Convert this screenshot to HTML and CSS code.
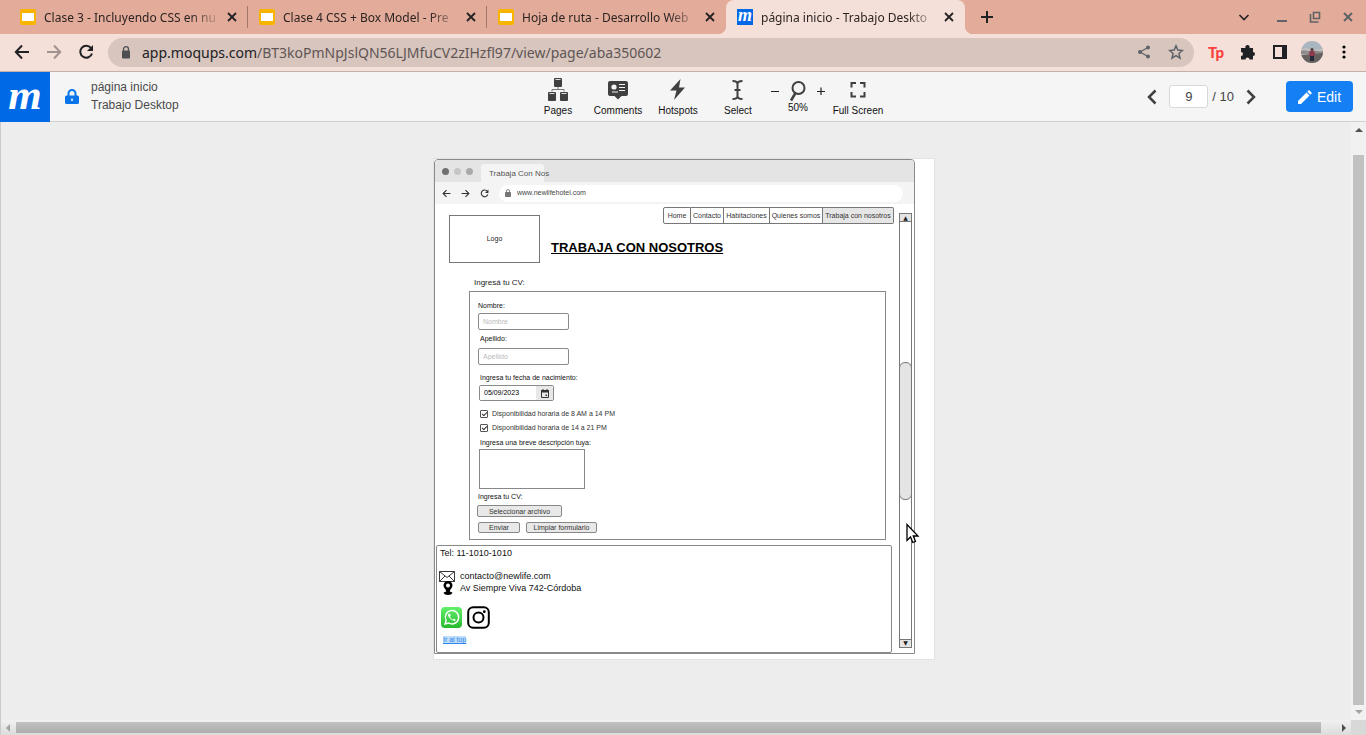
FILE: index.html
```html
<!DOCTYPE html>
<html lang="es">
<head>
<meta charset="utf-8">
<title>página inicio - Trabajo Desktop</title>
<link rel="stylesheet" href="styles.css">
</head>
<body>
<header class="tabstrip">
  <div class="tab">
    <span class="slides"></span><span class="tab-title">Clase 3 - Incluyendo CSS en nu</span>
    <button class="tab-close" aria-label="Cerrar"><svg width="10" height="10" viewBox="0 0 10 10"><path d="M1 1l8 8M9 1l-8 8"/></svg></button>
  </div>
  <div class="tab">
    <span class="slides"></span><span class="tab-title">Clase 4 CSS + Box Model - Pre</span>
    <button class="tab-close" aria-label="Cerrar"><svg width="10" height="10" viewBox="0 0 10 10"><path d="M1 1l8 8M9 1l-8 8"/></svg></button>
  </div>
  <div class="tab tab-last">
    <span class="slides"></span><span class="tab-title">Hoja de ruta - Desarrollo Web</span>
    <button class="tab-close" aria-label="Cerrar"><svg width="10" height="10" viewBox="0 0 10 10"><path d="M1 1l8 8M9 1l-8 8"/></svg></button>
  </div>
  <div class="tab tab-active">
    <span class="mfav">m</span><span class="tab-title">página inicio - Trabajo Deskto</span>
    <button class="tab-close" aria-label="Cerrar"><svg width="10" height="10" viewBox="0 0 10 10"><path d="M1 1l8 8M9 1l-8 8"/></svg></button>
  </div>
  <button class="new-tab" aria-label="Nueva pestaña"><svg width="12" height="12" viewBox="0 0 12 12"><path d="M6 0v12M0 6h12"/></svg></button>
  <div class="win-controls">
    <button aria-label="Buscar pestañas"><svg width="12" height="12" viewBox="0 0 12 12"><path d="M1.500 4L6 8.500L10.500 4" fill="none" stroke="#222" stroke-width="1.600"/></svg></button>
    <button class="minimize" aria-label="Minimizar"><svg width="12" height="12" viewBox="0 0 12 12"><path d="M1 10h10" stroke="#5f6368" stroke-width="2"/></svg></button>
    <button aria-label="Restaurar"><svg width="12" height="12" viewBox="0 0 12 12"><path d="M4.500 1.500h6v6h-6zM1.500 3v8h8" fill="none" stroke="#5f6368" stroke-width="1.600"/></svg></button>
    <button aria-label="Cerrar ventana"><svg width="12" height="12" viewBox="0 0 12 12"><path d="M2 2l8 8M10 2l-8 8" stroke="#5f6368" stroke-width="2"/></svg></button>
  </div>
</header>
<nav class="toolbar">
  <button class="bar-btn" aria-label="Atrás"><svg width="16" height="16" viewBox="0 0 16 16"><path d="M15 8H2M8 1.500L1.800 8L8 14.500" fill="none" stroke="#202124" stroke-width="2"/></svg></button>
  <button class="bar-btn" aria-label="Adelante"><svg width="16" height="16" viewBox="0 0 16 16"><path d="M1 8h13M8 1.500L14.200 8L8 14.500" fill="none" stroke="#a19290" stroke-width="2"/></svg></button>
  <button class="bar-btn" aria-label="Recargar"><svg width="16" height="16" viewBox="0 0 16 16"><path d="M13 4A6 6 0 1 0 14 9.500" fill="none" stroke="#202124" stroke-width="2"/><path d="M15 1v6H9z" fill="#202124"/></svg></button>
  <div class="omnibox">
    <svg width="10" height="13" viewBox="0 0 10 13"><rect x="1" y="4.500" width="8" height="8" rx="1" fill="#4d4f52"/><path d="M2.500 5V3.200a2.500 2.500 0 0 1 5 0V5" fill="none" stroke="#4d4f52" stroke-width="1.300"/></svg>
    <span class="url"><b>app.moqups.com</b>/BT3koPmNpJslQN56LJMfuCV2zIHzfl97/view/page/aba350602</span>
    <button class="bar-btn" aria-label="Compartir"><svg width="14" height="14" viewBox="0 0 14 14"><path d="M11 2.500L3 7l8 4.500" fill="none" stroke="#5f6368" stroke-width="1.300"/><circle cx="11" cy="2.500" r="2" fill="#5f6368"/><circle cx="3" cy="7" r="2" fill="#5f6368"/><circle cx="11" cy="11.500" r="2" fill="#5f6368"/></svg></button>
    <button class="bar-btn" aria-label="Marcador"><svg width="16" height="16" viewBox="0 0 16 16"><path d="M8 1.800l1.800 4.300 4.600.4-3.500 3 1.100 4.600L8 11.600l-4 2.500 1.100-4.600-3.500-3 4.600-.4z" fill="none" stroke="#5f6368" stroke-width="1.500"/></svg></button>
  </div>
  <button class="bar-btn tp" aria-label="Tp">Tp</button>
  <button class="bar-btn" aria-label="Extensiones"><svg width="16" height="16" viewBox="0 0 16 16"><path d="M1 4h4.500a2.200 2.200 0 1 1 4 0H13v4a2 2 0 1 1 0 4v3.500H9.500a2 2 0 0 0-4 0H1V12a2 2 0 0 0 0-4z" fill="#202124"/></svg></button>
  <button class="bar-btn" aria-label="Panel lateral"><svg width="14" height="14" viewBox="0 0 14 14"><rect x="1" y="1" width="12" height="12" fill="none" stroke="#202124" stroke-width="2"/><path d="M9 0h5v14H9z" fill="#202124"/></svg></button>
  <button class="bar-btn" aria-label="Perfil"><svg width="22" height="22" viewBox="0 0 22 22"><defs><clipPath id="av"><circle cx="11" cy="11" r="11"/></clipPath></defs><g clip-path="url(#av)"><path d="M0 0h22v22H0z" fill="#a9b5bf"/><path d="M0 8l5-1 6 2 11-1v6H0z" fill="#c4bfbc"/><path d="M0 10c4-2 7 1 11 0s7 1 11 0v3H0z" fill="#8f8c8d"/><path d="M0 14l22-2v10H0z" fill="#66605f"/><circle cx="11" cy="8.500" r="1.500" fill="#503635"/><path d="M8.500 10h5l.5 5h-6z" fill="#8c3b4e"/><path d="M9 15h4v5H9z" fill="#272a3a"/></g></svg></button>
  <button class="bar-btn" aria-label="Menú"><svg width="4" height="14" viewBox="0 0 4 14"><circle cx="2" cy="2" r="1.600"/><circle cx="2" cy="7" r="1.600"/><circle cx="2" cy="12" r="1.600"/></svg></button>
</nav>
<header class="app-bar">
  <div class="app-left">
    <span class="brand">m</span>
    <svg class="lock" width="14" height="16" viewBox="0 0 14 16"><rect x="0" y="6.500" width="14" height="8.500" rx="1.500" fill="#0a74ea"/><path d="M3.500 7V4.500a3.500 3.500 0 0 1 7 0V7" fill="none" stroke="#0a74ea" stroke-width="2"/><path d="M7 9.500v2.500" stroke="#fff" stroke-width="1.500"/></svg>
    <div class="doc"><span>página inicio</span><span>Trabajo Desktop</span></div>
  </div>
  <div class="tools">
    <button class="tool"><svg width="22" height="24" viewBox="0 0 22 24"><g fill="#404040"><rect x="7" y="0" width="8" height="9" rx="1"/><rect x="1" y="14" width="8" height="9" rx="1"/><rect x="13" y="14" width="8" height="9" rx="1"/></g><path d="M8.500 1.500h5M2.500 15.500h5M14.500 15.500h5" stroke="#ddd"/><path d="M11 9v2.500M5 13.500v-2h12v2" fill="none" stroke="#777"/></svg>Pages</button>
    <button class="tool"><svg width="22" height="24" viewBox="0 0 22 24"><path d="M3 3h16q2 0 2 2v11q0 2-2 2h-4.500L11 21.500l-3.500-3.500H3q-2 0-2-2V5q0-2 2-2z" fill="#404040"/><circle cx="7" cy="9" r="2.600" fill="#f4f4f4"/><path d="M12 6.500h6M12 9.500h6M12 12.500h6M5 14h6" stroke="#f4f4f4" stroke-width="1.200"/></svg>Comments</button>
    <button class="tool"><svg width="22" height="24" viewBox="0 0 22 24"><path d="M13.500 1L3 12.500h6.500L7 22 18 9.500h-6z" fill="#404040"/></svg>Hotspots</button>
    <button class="tool"><svg width="22" height="24" viewBox="0 0 22 24"><path d="M5.500 3q5 0 5 3q0-3 5-3M10.500 6v12M5.500 21q5 0 5-3q0 3 5 3M7.500 12h6" fill="none" stroke="#404040" stroke-width="2"/></svg>Select</button>
    <div class="zoomer">
      <button aria-label="Alejar"><svg width="8" height="8" viewBox="0 0 8 8"><path d="M0 4.500h8" stroke="#222"/></svg></button>
      <span class="zoom-value"><svg width="18" height="22" viewBox="0 0 18 22"><circle cx="9.500" cy="8" r="6" fill="none" stroke="#404040" stroke-width="2"/><path d="M6.500 13L2 20.500" stroke="#404040" stroke-width="2.500"/></svg>50%</span>
      <button aria-label="Acercar"><svg width="8" height="8" viewBox="0 0 8 8"><path d="M0 4.500h8M4 .5v8" stroke="#222" stroke-width="1.200"/></svg></button>
    </div>
    <button class="tool"><svg width="22" height="24" viewBox="0 0 22 24"><path d="M9 5H4.500v4.500M13 5h4.500v4.500M4.500 14v4.500H9M17.500 14v4.500H13" fill="none" stroke="#404040" stroke-width="2"/></svg>Full Screen</button>
  </div>
  <div class="pager">
    <button aria-label="Anterior"><svg width="10" height="16" viewBox="0 0 10 16"><path d="M8.500 1.500L2 8l6.500 6.500" fill="none" stroke="#404040" stroke-width="2.500"/></svg></button>
    <input class="page-no" aria-label="Página" value="9"><span class="page-total">/ 10</span>
    <button aria-label="Siguiente"><svg width="10" height="16" viewBox="0 0 10 16"><path d="M1.500 1.500L8 8l-6.500 6.500" fill="none" stroke="#404040" stroke-width="2.500"/></svg></button>
    <button class="edit"><svg width="14" height="14" viewBox="0 0 14 14"><path d="M0 14v-3l8.500-8.500 3 3L3 14zM9.300 1.700L11 0l3 3-1.700 1.700z" fill="#fff"/></svg>Edit</button>
  </div>
</header>
<main class="viewport">
  <section class="canvas">
    <article class="paper">
      <div class="mock">
        <div class="mock-tabs"><i class="dot d1"></i><i class="dot d2"></i><i class="dot d3"></i><span class="mock-tab">Trabaja Con Nos</span></div>
        <div class="mock-bar">
          <svg width="9" height="9" viewBox="0 0 16 16"><path d="M15 8H2M8 2L2 8l6 6" fill="none" stroke="#333" stroke-width="2"/></svg>
          <svg width="9" height="9" viewBox="0 0 16 16"><path d="M1 8h13M8 2l6 6-6 6" fill="none" stroke="#333" stroke-width="2"/></svg>
          <svg width="9" height="9" viewBox="0 0 16 16"><path d="M13 4A6 6 0 1 0 14 9.500" fill="none" stroke="#333" stroke-width="2"/><path d="M15 1v6H9z" fill="#333"/></svg>
          <span class="mock-url"><svg width="6" height="8" viewBox="0 0 10 13"><rect x="0" y="5" width="10" height="8" rx="1" fill="#777"/><path d="M2.500 5V3.200a2.500 2.500 0 0 1 5 0V5" fill="none" stroke="#777" stroke-width="1.500"/></svg>www.newlifehotel.com</span>
        </div>
        <div class="mock-body">
          <div class="mock-main">
            <div class="hero">
              <div class="logo">Logo</div>
              <div class="hero-right">
                <nav class="menu"><a href="#" class="w1">Home</a><a href="#" class="w2">Contacto</a><a href="#" class="w3">Habitaciones</a><a href="#" class="w4">Quienes somos</a><a href="#" class="w5 current">Trabaja con nosotros</a></nav>
                <h1>TRABAJA CON NOSOTROS</h1>
              </div>
            </div>
            <h2>Ingresá tu CV:</h2>
            <form class="cv">
              <label class="lb first" for="nombre">Nombre:</label>
              <input class="field" id="nombre" placeholder="Nombre">
              <label class="lb second" for="apellido">Apellido:</label>
              <input class="field" id="apellido" placeholder="Apellido">
              <label class="lb third" for="fecha">Ingresa tu fecha de nacimiento:</label>
              <div class="date"><input id="fecha" value="05/09/2023"><button type="button" aria-label="Calendario"><svg width="8" height="9" viewBox="0 0 8 9"><path d="M.5 1.500h7v7h-7z" fill="none" stroke="#333"/><path d="M0 1h8v2.500H0zM1.500 0h1v1h-1zM5.500 0h1v1h-1zM4.500 5.500h1.500v1.500H4.500z" fill="#333"/></svg></button></div>
              <label class="check c1"><input type="checkbox" checked>Disponibilidad horaria de 8 AM a 14 PM</label>
              <label class="check c2"><input type="checkbox" checked>Disponibilidad horaria de 14 a 21 PM</label>
              <label class="lb fourth" for="desc">Ingresa una breve descripción tuya:</label>
              <textarea id="desc"></textarea>
              <label class="lb fifth" for="archivo">Ingresa tu CV:</label>
              <button type="button" class="btn file" id="archivo">Seleccionar archivo</button>
              <div class="actions"><button type="button" class="btn send">Enviar</button><button type="button" class="btn clear">Limpiar formulario</button></div>
            </form>
            <footer class="foot">
              <p class="tel">Tel: 11-1010-1010</p>
              <p class="contact"><svg width="16" height="11" viewBox="0 0 16 11"><path d="M.5.5h15v10H.5zM.5.500L8 6.500 15.500.5M.5 10.500l5.500-5.500M15.500 10.500L10 5" fill="none" stroke="#222" stroke-width=".9"/></svg>contacto@newlife.com</p>
              <p class="contact address"><svg width="18" height="14" viewBox="0 0 18 14"><path d="M9 0a4.500 4.500 0 0 1 4.500 4.500C13.500 7 11 8 10.800 10.500Q13.500 11 13.500 12q-1 2-4.500 2t-4.500-2q0-1 2.700-1.500C7 8 4.500 7 4.500 4.500A4.500 4.500 0 0 1 9 0z"/><circle cx="9" cy="4.500" r="2" fill="#fff"/></svg>Av Siempre Viva 742-Córdoba</p>
              <div class="social">
                <svg width="21" height="21" viewBox="0 0 21 21"><defs><linearGradient id="wa" x2="0" y2="1"><stop stop-color="#63f06a"/><stop offset="1" stop-color="#26b92d"/></linearGradient></defs><rect width="21" height="21" rx="4" fill="url(#wa)"/><path d="M4 17l1.200-3.500A6.700 6.700 0 1 1 7.700 16z" fill="none" stroke="#fff" stroke-width="1.400"/><path d="M8 6.500q-2 1.500.5 4.500t5.500 3q1-1 .5-1.500l-1.700-.8-1 1Q9.500 11.500 9 9.800l.8-1-.8-2z" fill="#fff"/></svg>
                <svg width="23" height="23" viewBox="0 0 23 23"><rect x="1.200" y="1.200" width="20.600" height="20.600" rx="5" fill="none" stroke="#000" stroke-width="2"/><circle cx="11.500" cy="11.500" r="5" fill="none" stroke="#000" stroke-width="2"/><circle cx="17.300" cy="5.700" r="1.400"/></svg>
              </div>
              <a class="top" href="#">Ir al top</a>
            </footer>
          </div>
          <div class="mock-scroll"><span>▲</span><i></i><span>▼</span></div>
        </div>
      </div>
      <svg class="cursor" width="14" height="22" viewBox="0 0 14 22"><path d="M1 1.500v16l3.500-3.500 2.300 5.500 2.700-1.100L7.300 13H12z" fill="#fff" stroke="#000" stroke-width="1.300"/></svg>
    </article>
  </section>
  <div class="vbar"><i class="tri up"></i><i class="vthumb"></i><i class="tri down"></i></div>
  <div class="hbar"><i class="tri left"></i><i class="hthumb"></i><i class="tri right"></i></div>
  <div class="corner"></div>
</main>
</body>
</html>
```
FILE: styles.css
```css
* { box-sizing: border-box; }
body { margin: 0; height: 100vh; display: flex; flex-direction: column; overflow: hidden; font-family: "Liberation Sans", Arial, sans-serif; color: #222; }
button { border: 0; background: none; padding: 0; font: inherit; color: inherit; display: flex; align-items: center; justify-content: center; }
svg { display: block; flex: none; }
p, h1, h2 { margin: 0; }

/* Browser tabs */
.tabstrip { display: flex; height: 34px; flex: none; padding-left: 9px; background: #e3ab99; font: 12px "Noto Sans", sans-serif; }
.tab { position: relative; width: 239px; display: flex; align-items: center; padding: 0 10px 0 11px; border-right: 1px solid transparent; border-image: linear-gradient(transparent 7px, #a2776a 7px, #a2776a 27px, transparent 27px) 1; }
.tab-last, .tab-active { border-image: none; }
.tab-active { background: #f5e0d9; border-radius: 8px 8px 0 0; }
.tab-active::before, .tab-active::after { content: ""; position: absolute; bottom: 0; width: 8px; height: 8px; }
.tab-active::before { left: -8px; background: radial-gradient(circle at 0 0, #e3ab99 8px, #f5e0d9 8px); }
.tab-active::after { right: -9px; background: radial-gradient(circle at 100% 0, #e3ab99 8px, #f5e0d9 8px); }
.slides { width: 16px; height: 16px; flex: none; background: #fff; border: solid #f9b400; border-width: 4px 2px; border-radius: 2px; }
.mfav { width: 16px; height: 16px; flex: none; background: #0069e6; color: #fff; font: italic bold 18px/12px "Liberation Serif", serif; text-align: center; }
.tab-title { flex: 1; margin: 0 0 0 8px; overflow: hidden; white-space: nowrap; color: #2b2422; mask-image: linear-gradient(to right, #000 80%, transparent 97%); }
.tab-close path { stroke: #222; stroke-width: 1.8; }
.new-tab { width: 44px; }
.new-tab path { stroke: #222; stroke-width: 2; }
.win-controls { display: flex; align-items: center; gap: 21px; margin-left: auto; padding-right: 12px; }
.minimize { margin-left: 5px; }

.toolbar { display: flex; align-items: center; height: 38px; flex: none; padding: 0 6px 1px; background: #f5e0d9; border-bottom: 1px solid #c4b0aa; }
.bar-btn { width: 32px; height: 29px; flex: none; }
.omnibox { flex: 1; height: 29px; display: flex; align-items: center; margin: 0 6px 0 6px; padding: 0 2px 0 13px; border-radius: 15px; background: #d7c5be; }
.url { flex: 1; margin-left: 11px; font: 14px "Noto Sans", sans-serif; color: #5f5654; white-space: nowrap; overflow: hidden; }
.url b { font-weight: 400; color: #202124; }
.tp { color: #fb3f3f; font: 900 15px Lato, sans-serif; }

/* Application bar */
.app-bar { display: flex; height: 50px; flex: none; background: #f5f5f5; border-bottom: 1px solid #d0d0d0; }
.app-left { display: flex; align-items: center; flex: 0 0 528px; color: #4a4a4a; }
.brand { width: 50px; height: 50px; background: #0069e6; color: #fff; font: italic bold 43px/45px "Liberation Serif", serif; text-align: center; }
.lock { margin: 0 12px 0 15px; }
.doc { display: flex; flex-direction: column; padding-bottom: 1px; font-size: 12px; line-height: 18px; }
.tools { display: flex; color: #111; font-size: 10px; line-height: 12px; }
.tool { width: 60px; flex-direction: column; justify-content: flex-start; padding-top: 6px; gap: 3px; white-space: nowrap; }
.zoomer { width: 60px; display: flex; justify-content: center; gap: 4px; padding-top: 8px; }
.zoomer button { height: 22px; }
.zoom-value { width: 30px; display: flex; flex-direction: column; align-items: center; }
.pager { display: flex; align-items: center; margin-left: auto; padding-right: 13px; font-size: 13px; color: #444; }
.page-no { width: 39px; height: 23px; margin: 0 4px 0 12px; padding: 0; text-align: center; font: inherit; color: #444; border: 1px solid #d8d8d8; border-radius: 3px; background: #fff; }
.page-total { margin-right: 12px; }
.edit { width: 67px; height: 31px; gap: 5px; margin-left: 30px; border-radius: 4px; background: #1480f4; color: #fff; font-size: 14px; }

/* Canvas with its scroll bars */
.viewport { flex: 1; min-height: 0; display: grid; grid-template: 1fr 15px / 1fr 15px; background: #ededed; border-left: 1px solid #ccc; }
.canvas { display: flex; justify-content: center; align-items: flex-start; padding: 37px 0 0 16px; overflow: hidden; }
.vbar { display: flex; flex-direction: column; align-items: center; background: #f1f1f1; padding: 6px 0; }
.vthumb { flex: 1; width: 11px; margin: 23px 0 5px; background: #c1c1c1; }
.hbar { display: flex; align-items: center; background: linear-gradient(#f1f1f1, #dcdcdc); padding: 0 5px; }
.hthumb { flex: 1; height: 11px; margin: 0 21px 0 6px; background: linear-gradient(#c1c1c1, #adadad); }
.corner { background: #d8d8d8; }
.tri { border: 4px solid transparent; }
.up { border-top: 0; border-bottom-color: #505050; }
.down { border-bottom: 0; border-top-color: #a3a3a3; }
.left { border-left: 0; border-right-color: #a3a3a3; }
.right { border-right: 0; border-left-color: #505050; }

.paper { position: relative; width: 500px; padding: 0 19px 5px 0; background: #fff; box-shadow: 0 0 0 1px #e2e2e2; }
.cursor { position: absolute; left: 472px; top: 364px; }

/* Wireframe browser */
.mock { border: 1px solid #8a8a8a; border-radius: 4px 4px 0 0; overflow: hidden; font-size: 7px; line-height: 10px; }
.mock-tabs { display: flex; align-items: center; gap: 5px; height: 22px; padding-left: 7px; background: #e4e4e4; }
.dot { width: 7px; height: 7px; border-radius: 50%; }
.d1 { background: #707070; }
.d2 { background: #c6c6c6; }
.d3 { background: #aaa; }
.mock-tab { align-self: flex-end; width: 63px; height: 18px; margin-left: 3px; padding-left: 8px; line-height: 19px; white-space: nowrap; background: #f4f4f4; border-radius: 3px 3px 0 0; color: #555; font-size: 8px; }
.mock-bar { display: flex; align-items: center; gap: 10px; height: 22px; padding: 0 11px 0 7px; background: #f4f4f4; }
.mock-url { flex: 1; display: flex; align-items: center; gap: 6px; height: 17px; padding-left: 6px; border-radius: 9px; background: #fff; color: #444; }
.mock-body { display: flex; background: #fff; }
.mock-main { flex: 1; display: flex; flex-direction: column; }
.hero { display: flex; padding: 3px 0 0 14px; }
.logo { width: 91px; height: 48px; margin-top: 8px; border: 1px solid #777; display: flex; align-items: center; justify-content: center; }
.hero-right { flex: 1; margin-left: 11px; }
.menu { display: flex; justify-content: flex-end; }
.menu a { height: 17px; line-height: 15px; text-align: center; white-space: nowrap; color: #333; text-decoration: none; border: 1px solid #777; border-left-width: 0; }
.menu .w1 { width: 28px; border-left-width: 1px; border-radius: 2px 0 0 2px; }
.menu .w2 { width: 33px; }
.menu .w3 { width: 46px; }
.menu .w4 { width: 53px; }
.menu .w5 { width: 71px; border-radius: 0 2px 2px 0; }
.menu .current { background: #e6e6e6; }
h1 { margin-top: 16px; font-size: 13px; line-height: 16px; color: #000; text-decoration: underline; }
h2 { margin: 15px 0 3px 39px; font-size: 8px; line-height: 10px; font-weight: 400; }
.cv { display: flex; flex-direction: column; align-items: flex-start; margin: 0 8px 0 34px; padding: 9px 0 6px 7px; border: 1px solid #888; color: #111; }
.lb { margin-left: 3px; }
.first, .fifth { margin-left: 1px; }
.first { margin-bottom: 2px; }
.second { margin-top: 4px; margin-bottom: 4px; }
.third { margin-top: 8px; margin-bottom: 2px; }
.fourth { margin-top: 5px; margin-bottom: 1px; }
.fifth { margin-top: 3px; margin-bottom: 3px; }
.field { width: 91px; height: 17px; margin-left: 1px; padding: 0 4px; border: 1px solid #8a8a8a; border-radius: 2px; font: inherit; }
.field::placeholder { color: #bbb; }
.date { display: flex; width: 75px; height: 16px; margin-left: 2px; border: 1px solid #8a8a8a; border-radius: 2px; overflow: hidden; }
.date input { flex: 1; min-width: 0; border: 0; padding: 0 4px; font: inherit; }
.date button { width: 17px; background: #e8e8e8; }
.check { display: flex; align-items: center; gap: 4px; height: 10px; margin-left: 3px; color: #333; }
.check input { appearance: none; width: 8px; height: 8px; margin: 0; border: 1px solid #555; border-radius: 1px; display: flex; justify-content: center; }
.check input:checked::before { content: ""; width: 2px; height: 4px; border: solid #333; border-width: 0 1px 1px 0; transform: rotate(45deg); }
.c1 { margin-top: 8px; }
.c2 { margin-top: 4px; }
textarea { width: 106px; height: 40px; margin-left: 2px; padding: 2px; border: 1px solid #888; resize: none; font: inherit; }
.btn { height: 12px; border: 1px solid #888; border-radius: 2px; background: #e8e8e8; color: #333; line-height: 9px; }
.file { width: 85px; }
.actions { display: flex; gap: 6px; margin: 5px 0 0 1px; }
.actions .btn { height: 11px; }
.send { width: 42px; }
.clear { width: 71px; }
.foot { margin: 5px 2px 0 1px; padding: 1px 0 8px 2px; border: 1px solid #888; border-radius: 2px; font-size: 9px; line-height: 12px; color: #111; }
.tel { padding-left: 1px; height: 23px; }
.contact { display: flex; align-items: center; gap: 5px; height: 12px; }
.address { gap: 3px; }
.social { display: flex; align-items: center; gap: 5px; margin: 12px 0 7px 2px; }
.top { display: block; width: max-content; margin-left: 4px; font-size: 7px; line-height: 8px; color: #2a86e8; background: #c0dcfb; }
.mock-scroll { width: 13px; margin: 9px 2px 5px 5px; display: flex; flex-direction: column; justify-content: space-between; border: 1px solid #777; background: #fff; }
.mock-scroll span { height: 8px; font: 6px/8px "DejaVu Sans", sans-serif; text-align: center; background: #e4e4e4; border: solid #777; border-width: 0 0 1px; }
.mock-scroll span:last-child { border-width: 1px 0 0; line-height: 6px; }
.mock-scroll i { height: 138px; margin: 0 -1px; background: #e4e4e4; border: 1px solid #777; border-radius: 6px; }
```
